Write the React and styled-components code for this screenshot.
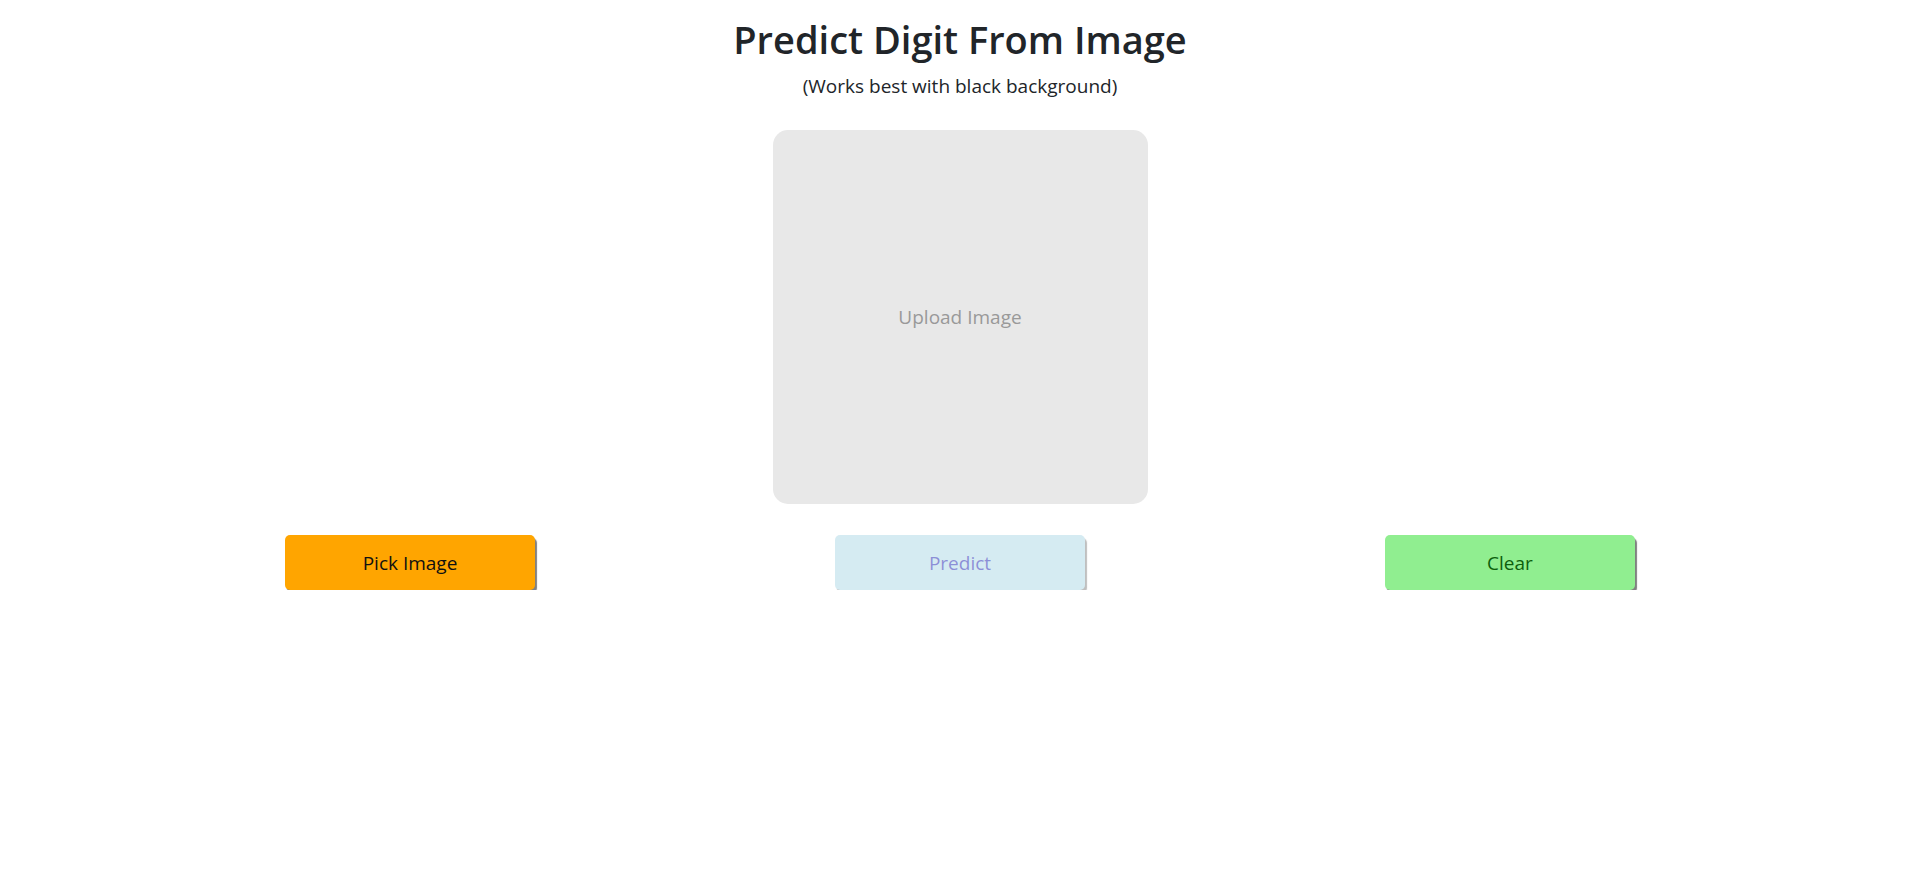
import React from "react";
import styled, { createGlobalStyle } from "styled-components";

const Global = createGlobalStyle`
  html, body { margin: 0; padding: 0; background: #fff; }
  body { font-family: "Open Sans", "Noto Sans", sans-serif; color: #212529; }
`;

const Page = styled.main`
  display: flex;
  flex-direction: column;
  align-items: center;
  padding-top: 15px;
`;

const Title = styled.h1`
  margin: 0;
  font-size: 38px;
  line-height: 48px;
  font-weight: 600;
  color: #212529;
`;

const Subtitle = styled.p`
  margin: 10px 0 0;
  font-size: 19px;
  line-height: 27px;
  color: #212529;
`;

const DropZone = styled.div`
  margin-top: 30px;
  width: 375px;
  height: 374px;
  border-radius: 15px;
  background: #e8e8e8;
  display: flex;
  align-items: center;
  justify-content: center;
  color: #999999;
  font-size: 19px;
`;

const ButtonRow = styled.div`
  margin-top: 31px;
  display: flex;
  justify-content: center;
  gap: 300px;
`;

const Button = styled.button`
  width: 250px;
  height: 55px;
  border: none;
  border-radius: 5px;
  background: ${(p) => p.$bg};
  color: ${(p) => p.$fg};
  font-family: inherit;
  font-size: 19px;
  box-shadow: 2px 3px 1px #808080;
  opacity: ${(p) => (p.disabled ? 0.5 : 1)};
  cursor: pointer;
`;

export default function App() {
  return (
    <>
      <Global />
      <Page>
        <Title>Predict Digit From Image</Title>
        <Subtitle>(Works best with black background)</Subtitle>
        <DropZone>Upload Image</DropZone>
        <ButtonRow>
          <Button $bg="#ffa500" $fg="#111">Pick Image</Button>
          <Button $bg="#add8e6" $fg="#1a22b0" disabled>Predict</Button>
          <Button $bg="#90ee90" $fg="#0d5f0d">Clear</Button>
        </ButtonRow>
      </Page>
    </>
  );
}
